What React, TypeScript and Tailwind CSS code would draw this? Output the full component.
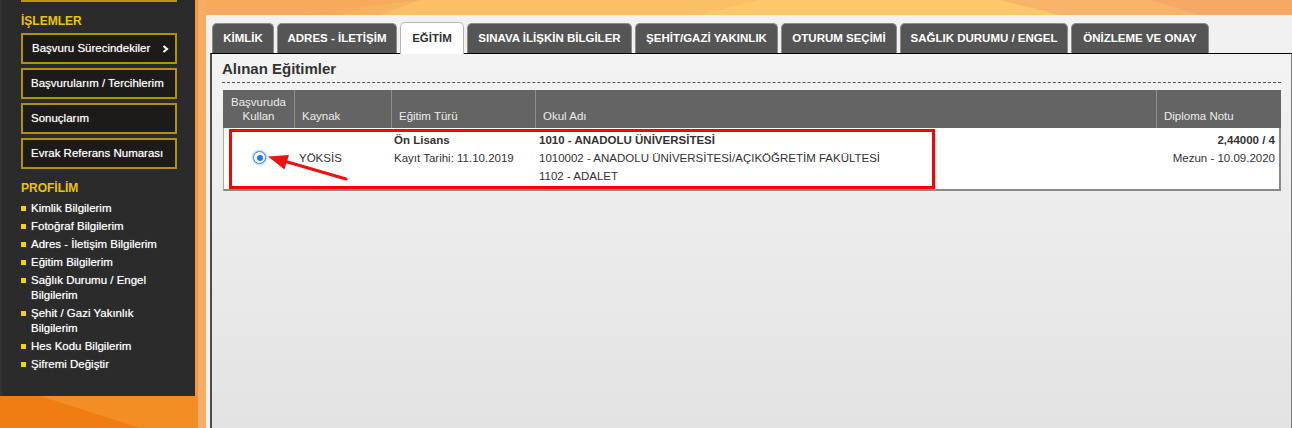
import React from "react";

const tabs: { label: string; w: string; active?: boolean }[] = [
  { label: "KİMLİK", w: "w-[62px]" },
  { label: "ADRES - İLETİŞİM", w: "w-[120px]" },
  { label: "EĞİTİM", w: "w-[64px]", active: true },
  { label: "SINAVA İLİŞKİN BİLGİLER", w: "w-[165px]" },
  { label: "ŞEHİT/GAZİ YAKINLIK", w: "w-[143px]" },
  { label: "OTURUM SEÇİMİ", w: "w-[116px]" },
  { label: "SAĞLIK DURUMU / ENGEL", w: "w-[168px]" },
  { label: "ÖNİZLEME VE ONAY", w: "w-[138px]" },
];

const buttons = [
  "Başvuru Sürecindekiler",
  "Başvurularım / Tercihlerim",
  "Sonuçlarım",
  "Evrak Referans Numarası",
];

const profile: React.ReactNode[] = [
  "Kimlik Bilgilerim",
  "Fotoğraf Bilgilerim",
  "Adres - İletişim Bilgilerim",
  "Eğitim Bilgilerim",
  <>
    Sağlık Durumu / Engel
    <br />
    Bilgilerim
  </>,
  <>
    Şehit / Gazi Yakınlık
    <br />
    Bilgilerim
  </>,
  "Hes Kodu Bilgilerim",
  "Şifremi Değiştir",
];

function Background() {
  return (
    <svg className="absolute inset-0" width="1292" height="428" viewBox="0 0 1292 428">
      <defs>
        <linearGradient id="bg" x1="0" y1="0" x2="1" y2="0">
          <stop offset="0" stopColor="#ee7b10" />
          <stop offset="0.16" stopColor="#f39a3c" />
          <stop offset="0.3" stopColor="#f8b460" />
          <stop offset="0.6" stopColor="#fcc666" />
          <stop offset="0.85" stopColor="#f9bb66" />
          <stop offset="1" stopColor="#f5a862" />
        </linearGradient>
      </defs>
      <rect width="1292" height="428" fill="url(#bg)" />
      <polygon points="0,396 200,396 200,428 0,428" fill="#ef7d12" />
      <polygon points="40,396 200,396 200,428 140,428" fill="#f29228" opacity="0.8" />
      <rect x="198" y="0" width="9" height="428" fill="#f5ad68" />
      <polygon points="206,0 420,0 300,15 206,15" fill="#f7aa5c" />
      <polygon points="420,0 760,0 700,15 380,15" fill="#fbbf65" />
      <polygon points="760,0 1000,0 1060,15 700,15" fill="#fdc968" />
      <polygon points="1000,0 1292,0 1292,15 1060,15" fill="#f8b468" />
      <polygon points="1150,0 1292,0 1292,15 1200,15" fill="#f5a964" />
    </svg>
  );
}

function Annotation() {
  return (
    <svg className="absolute inset-0 pointer-events-none" width="1292" height="428" viewBox="0 0 1292 428">
      <rect x="230.5" y="130.5" width="703" height="57" fill="none" stroke="#ff0000" strokeWidth="3" />
      <line x1="346" y1="179" x2="284" y2="161" stroke="#f01010" strokeWidth="3" strokeLinecap="round" />
      <polygon points="268,156.5 289,155 284.5,169.5" fill="#f01010" />
    </svg>
  );
}

function Radio() {
  return (
    <span className="flex h-[13px] w-[13px] items-center justify-center rounded-full border-[1.5px] border-[#2f86f2] bg-white shadow-[0_0_2px_1px_rgba(90,160,255,0.5)]">
      <span className="h-[6px] w-[6px] rounded-full bg-[#1f76ea]" />
    </span>
  );
}

export default function App() {
  return (
    <div className="relative h-[428px] w-[1292px] overflow-hidden font-['Liberation_Sans',Arial,sans-serif]">
      <Background />
      <div className="relative flex h-full items-start">
        {/* Sidebar */}
        <aside className="h-[396px] w-[195px] shrink-0 border-l-2 border-[#333] bg-[#2b2b2b] pl-[19px]">
          <div className="h-[2px] w-[156px] bg-[#b8960f]" />
          <div className="mt-[12px] text-[12px] font-bold leading-[14px] text-[#ecc400]">İŞLEMLER</div>
          <div className="mt-[5px] flex flex-col gap-[4px]">
            {buttons.map((b, i) => (
              <div
                key={b}
                className={`flex h-[31px] w-[156px] items-center justify-between border-2 border-[#b38f10] bg-[#1c1b1a] text-[11.5px] text-white ${
                  i === 0 ? "pl-[9px] pr-[6px]" : "pl-[8px]"
                }`}
              >
                <span className="[text-shadow:0_0_1px_rgba(255,255,255,0.6)]">{b}</span>
                {i === 0 && (
                  <svg width="7" height="8" viewBox="0 0 7 8">
                    <path d="M1.5 1 L5 4 L1.5 7" fill="none" stroke="#fff" strokeWidth="2.2" />
                  </svg>
                )}
              </div>
            ))}
          </div>
          <div className="mt-[12px] text-[12px] font-bold leading-[14px] text-[#ecc400]">PROFİLİM</div>
          <ul className="mt-[6px] flex flex-col gap-[3px]">
            {profile.map((p, i) => (
              <li key={i} className="flex items-start text-[11.5px] leading-[15px] text-white">
                <span className="mr-[5px] mt-[5px] h-[5px] w-[5px] shrink-0 bg-[#f5d20a]" />
                <span className="[text-shadow:0_0_1px_rgba(255,255,255,0.6)]">{p}</span>
              </li>
            ))}
          </ul>
        </aside>

        {/* Main panel */}
        <main className="ml-[11px] mt-[15px] flex h-[413px] flex-1 flex-col bg-[#f1f1f1]">
          <div className="flex items-end gap-[3px] pl-[6px] pt-[7px]">
            {tabs.map((t) => (
              <div
                key={t.label}
                className={`flex ${t.w} items-center justify-center rounded-t-[5px] border border-b-0 text-[11.5px] font-bold ${
                  t.active
                    ? "relative z-10 -mb-px h-[32px] border-[#b5b5b5] bg-white text-[#333]"
                    : "h-[30px] border-[#8c8c8c] bg-[#555555] text-white"
                }`}
              >
                {t.label}
              </div>
            ))}
          </div>

          <section className="ml-[4px] mr-[1px] flex-1 border-l-2 border-r-[3px] border-t border-l-[#4d4d4d] border-r-[#7a7a7a] border-t-black bg-[linear-gradient(180deg,#f3f3f3_0%,#e3e3e3_100%)] px-[10px]">
            <div className="border-b border-dashed border-[#555] pb-[4px] pt-[6px] text-[15px] font-bold leading-[18px] text-[#333]">
              Alınan Eğitimler
            </div>

            <div className="ml-[1px] mt-[7px] text-[11.5px]">
              <div className="grid h-[38px] grid-cols-[71px_97px_144px_621px_122px] bg-[#646464] leading-[14px] text-[#ececec]">
                <div className="flex flex-col items-center justify-end pb-[5px] text-center">
                  <span>Başvuruda</span>
                  <span>Kullan</span>
                </div>
                <div className="flex items-end border-l border-[#8e8e8e] pb-[5px] pl-[7px]">Kaynak</div>
                <div className="flex items-end border-l border-[#8e8e8e] pb-[5px] pl-[7px]">Eğitim Türü</div>
                <div className="flex items-end border-l border-[#8e8e8e] pb-[5px] pl-[7px]">Okul Adı</div>
                <div className="flex items-end border-l border-[#8e8e8e] pb-[5px] pl-[7px]">Diploma Notu</div>
              </div>
              <div className="grid h-[63px] grid-cols-[71px_97px_144px_621px_122px] border-b-2 border-l border-r-2 border-b-[#8a8a8a] border-l-[#aaa] border-r-[#8a8a8a] bg-white leading-[18px] text-[#333]">
                <div className="flex items-center justify-center pb-[2px]">
                  <Radio />
                </div>
                <div className="flex items-center pb-[2px] pl-[4px]">YÖKSİS</div>
                <div className="pl-[2px] pt-[3px]">
                  <div className="font-bold">Ön Lisans</div>
                  <div>Kayıt Tarihi: 11.10.2019</div>
                </div>
                <div className="pl-[3px] pt-[3px]">
                  <div className="font-bold">1010 - ANADOLU ÜNİVERSİTESİ</div>
                  <div>1010002 - ANADOLU ÜNİVERSİTESİ/AÇIKÖĞRETİM FAKÜLTESİ</div>
                  <div>1102 - ADALET</div>
                </div>
                <div className="pr-[4px] pt-[3px] text-right">
                  <div className="font-bold">2,44000 / 4</div>
                  <div>Mezun - 10.09.2020</div>
                </div>
              </div>
            </div>
          </section>
        </main>
      </div>
      <Annotation />
    </div>
  );
}
